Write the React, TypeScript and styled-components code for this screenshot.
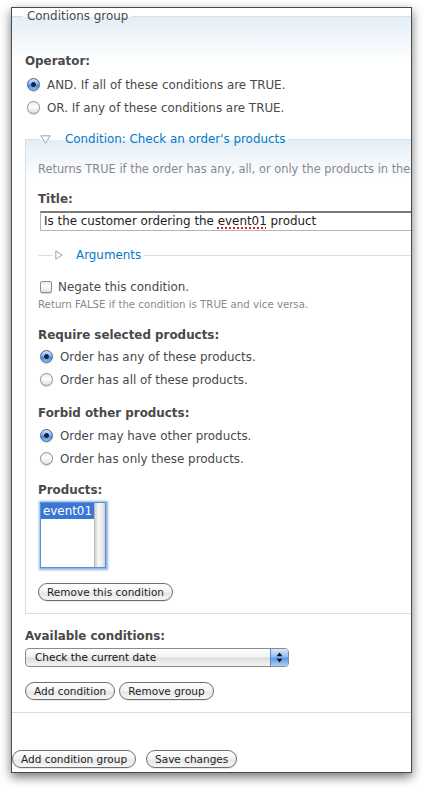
import React from 'react';
import styled, { createGlobalStyle } from 'styled-components';

const Global = createGlobalStyle`
  html, body { margin: 0; padding: 0; background: #fff; }
  body {
    font-family: "DejaVu Sans", Verdana, sans-serif;
    color: #494949;
    -webkit-font-smoothing: antialiased;
  }
  #root { width: 424px; height: 789px; overflow: hidden; }
`;

const Window = styled.div`
  margin: 7px 0 0 11px;
  width: 399px;
  height: 764px;
  border: 1px solid #4a4a4a;
  box-shadow: 0 4px 10px rgba(0, 0, 0, 0.55);
  background: #fff;
  overflow: hidden;
`;

const Fieldset = styled.fieldset<{ $variant: 'outer' | 'inner' | 'collapsed' }>`
  box-sizing: border-box;
  min-width: 0;
  border-style: solid;
  border-color: #d3e0ea;
  ${(p) =>
    p.$variant === 'outer'
      ? `
    margin: 0 0 0 -1px;
    width: 540px;
    border-width: 1px;
    padding: 29px 0 12px 13px;
    background: linear-gradient(#e4eef7, #fff 46px);
  `
      : p.$variant === 'inner'
      ? `
    margin: 12px 0 0 0;
    width: 500px;
    border-width: 1px;
    padding: 15px 0 12px 12px;
    background: linear-gradient(#e4eef7, #fff 40px);
  `
      : `
    margin: 16px 0 0 0;
    width: 480px;
    border-width: 1px 0 0 0;
    padding: 0;
    background: none;
  `}
`;

const Legend = styled.legend<{ $offset: number; $pad: number }>`
  margin-left: ${(p) => p.$offset}px;
  padding: 0 3px 0 ${(p) => p.$pad}px;
  line-height: 16px;
  height: 16px;
  font-size: 11.9px;
  color: #494949;
`;

const LegendInner = styled.span`
  display: flex;
  align-items: center;
  height: 16px;
`;

const Toggle = styled.svg<{ $gap: number }>`
  flex: none;
  margin-right: ${(p) => p.$gap}px;
`;

const LegendLink = styled.span`
  color: #027ac6;
  font-size: 11.9px;
`;

const Label = styled.div<{ $mt?: number }>`
  font-weight: bold;
  font-size: 11.9px;
  line-height: 16px;
  height: 16px;
  margin-top: ${(p) => p.$mt ?? 0}px;
  white-space: nowrap;
`;

const Group = styled.div<{ $mt?: number }>`
  display: flex;
  flex-direction: column;
  margin-top: ${(p) => p.$mt ?? 0}px;
`;

const OptionRow = styled.div<{ $h?: number }>`
  display: flex;
  align-items: center;
  height: ${(p) => p.$h ?? 23}px;
  padding-left: 2px;
  font-size: 11.9px;
  white-space: nowrap;
`;

const Radio = styled.span<{ $checked?: boolean }>`
  box-sizing: border-box;
  flex: none;
  width: 13px;
  height: 13px;
  margin-right: 7px;
  border-radius: 50%;
  border: 1px solid ${(p) => (p.$checked ? '#46648e' : '#8f8f8f')};
  background: ${(p) =>
    p.$checked
      ? 'radial-gradient(circle, #16233a 0 2px, rgba(22,35,58,0) 2.8px), linear-gradient(#d3e6fb, #78afee 50%, #3f86e0 55%, #93c4f6)'
      : 'linear-gradient(#ececec, #fdfdfd 45%, #f4f4f4 60%, #e2e2e2)'};
  box-shadow: 0 1px 1px rgba(0, 0, 0, 0.18);
`;

const Checkbox = styled.span`
  box-sizing: border-box;
  flex: none;
  width: 12px;
  height: 12px;
  margin-right: 6px;
  border-radius: 2px;
  border: 1px solid #8f8f8f;
  background: linear-gradient(#ececec, #fdfdfd 45%, #f4f4f4 60%, #e2e2e2);
  box-shadow: 0 1px 1px rgba(0, 0, 0, 0.15);
`;

const Description = styled.div<{ $size: number; $lh: number; $mt?: number }>`
  font-size: ${(p) => p.$size}px;
  line-height: ${(p) => p.$lh}px;
  height: ${(p) => p.$lh}px;
  margin-top: ${(p) => p.$mt ?? 0}px;
  color: #898989;
  white-space: nowrap;
`;

const TextField = styled.div`
  box-sizing: border-box;
  margin: 4px 0 0 2px;
  width: 460px;
  height: 20px;
  padding: 0 3px;
  border: 1px solid #b5b5b5;
  border-top: 2px solid #7b7b7b;
  background: #fff;
  font-size: 11.9px;
  line-height: 17px;
  color: #222;
  white-space: nowrap;
`;

const Misspelled = styled.span`
  text-decoration: underline dotted #e02020;
  text-decoration-thickness: 2px;
  text-underline-offset: 2px;
`;

const ListBox = styled.div`
  box-sizing: border-box;
  display: flex;
  margin: 5px 0 0 3px;
  width: 64px;
  height: 64px;
  background: #fff;
  box-shadow: 0 0 0 1px #5d8fd6, 0 0 2px 2.5px #8db3e4;
`;

const ListItems = styled.div`
  flex: 1;
  display: flex;
  flex-direction: column;
`;

const ListItem = styled.div<{ $selected?: boolean }>`
  height: 16px;
  line-height: 16px;
  padding-left: 2px;
  font-size: 11.9px;
  background: ${(p) => (p.$selected ? '#3b76d6' : 'transparent')};
  color: ${(p) => (p.$selected ? '#fff' : '#222')};
`;

const ScrollTrack = styled.div`
  flex: none;
  width: 10px;
  border-left: 1px solid #b9b9b9;
  background: linear-gradient(to right, #d4d4d4, #f6f6f6 35%, #ececec 70%, #d2d2d2);
`;

const ButtonRow = styled.div<{ $mt: number; $gap: number }>`
  display: flex;
  gap: ${(p) => p.$gap}px;
  margin-top: ${(p) => p.$mt}px;
`;

const Button = styled.button`
  box-sizing: border-box;
  height: 18px;
  margin: 0;
  padding: 0 8px;
  border: 1px solid #6f6f6f;
  border-radius: 9px;
  background: linear-gradient(#ffffff, #f3f3f3 50%, #e6e6e6 55%, #f7f7f7);
  box-shadow: 0 1px 0 rgba(0, 0, 0, 0.08);
  font-family: "DejaVu Sans", Verdana, sans-serif;
  font-size: 10.5px;
  line-height: 16px;
  color: #1e1e1e;
  white-space: nowrap;
`;

const Select = styled.div`
  box-sizing: border-box;
  display: flex;
  margin-top: 4px;
  width: 264px;
  height: 19px;
  border: 1px solid #8a8a8a;
  border-radius: 4px;
  background: linear-gradient(#ffffff, #f2f2f2 45%, #dedede 55%, #f4f4f4);
  overflow: hidden;
`;

const SelectText = styled.div`
  flex: 1;
  padding-left: 9px;
  font-size: 10.5px;
  line-height: 17px;
  color: #111;
  white-space: nowrap;
`;

const SelectArrows = styled.div`
  flex: none;
  width: 17px;
  display: flex;
  align-items: center;
  justify-content: center;
  border-left: 1px solid #5f86bd;
  background: linear-gradient(#d6e8fc, #8dbdf2 48%, #5898e6 52%, #a9d1f8);
`;

const DownTriangle = () => (
  <Toggle $gap={14} width="11" height="9" viewBox="0 0 11 9">
    <path d="M0.8 0.8 H10.2 L5.5 8.2 Z" fill="#fbfbfb" stroke="#a3a3a3" strokeWidth="1" strokeLinejoin="round" />
  </Toggle>
);

const RightTriangle = () => (
  <Toggle $gap={13} width="8" height="10" viewBox="0 0 8 10">
    <path d="M0.8 0.8 L7.2 5 L0.8 9.2 Z" fill="#fbfbfb" stroke="#a3a3a3" strokeWidth="1" strokeLinejoin="round" />
  </Toggle>
);

const UpDown = () => (
  <svg width="7" height="11" viewBox="0 0 7 11">
    <path d="M3.5 0.5 L6.5 4.2 H0.5 Z" fill="#111" />
    <path d="M3.5 10.5 L6.5 6.8 H0.5 Z" fill="#111" />
  </svg>
);

export default function App() {
  return (
    <>
      <Global />
      <Window>
        <Fieldset $variant="outer">
          <Legend $offset={-2} $pad={4}>Conditions group</Legend>

          <Label>Operator:</Label>
          <Group $mt={4}>
            <OptionRow>
              <Radio $checked />
              AND. If all of these conditions are TRUE.
            </OptionRow>
            <OptionRow>
              <Radio />
              OR. If any of these conditions are TRUE.
            </OptionRow>
          </Group>

          <Fieldset $variant="inner">
            <Legend $offset={2} $pad={0}>
              <LegendInner>
                <DownTriangle />
                <LegendLink>Condition: Check an order's products</LegendLink>
              </LegendInner>
            </Legend>

            <Description $size={11.4} $lh={14}>
              Returns TRUE if the order has any, all, or only the products in the
            </Description>

            <Label $mt={15}>Title:</Label>
            <TextField>
              Is the customer ordering the <Misspelled>event01</Misspelled> product
            </TextField>

            <Fieldset $variant="collapsed">
              <Legend $offset={15} $pad={2}>
                <LegendInner>
                  <RightTriangle />
                  <LegendLink>Arguments</LegendLink>
                </LegendInner>
              </Legend>
            </Fieldset>

            <Group $mt={16}>
              <OptionRow $h={16}>
                <Checkbox />
                Negate this condition.
              </OptionRow>
            </Group>
            <Description $size={10.2} $lh={12} $mt={4}>
              Return FALSE if the condition is TRUE and vice versa.
            </Description>

            <Label $mt={16}>Require selected products:</Label>
            <Group $mt={2}>
              <OptionRow>
                <Radio $checked />
                Order has any of these products.
              </OptionRow>
              <OptionRow>
                <Radio />
                Order has all of these products.
              </OptionRow>
            </Group>

            <Label $mt={14}>Forbid other products:</Label>
            <Group $mt={3}>
              <OptionRow>
                <Radio $checked />
                Order may have other products.
              </OptionRow>
              <OptionRow>
                <Radio />
                Order has only these products.
              </OptionRow>
            </Group>

            <Label $mt={12}>Products:</Label>
            <ListBox>
              <ListItems>
                <ListItem $selected>event01</ListItem>
              </ListItems>
              <ScrollTrack />
            </ListBox>

            <ButtonRow $mt={16} $gap={4}>
              <Button type="button">Remove this condition</Button>
            </ButtonRow>
          </Fieldset>

          <Label $mt={14}>Available conditions:</Label>
          <Select>
            <SelectText>Check the current date</SelectText>
            <SelectArrows>
              <UpDown />
            </SelectArrows>
          </Select>

          <ButtonRow $mt={15} $gap={4}>
            <Button type="button">Add condition</Button>
            <Button type="button">Remove group</Button>
          </ButtonRow>
        </Fieldset>

        <ButtonRow $mt={37} $gap={10}>
          <Button type="button">Add condition group</Button>
          <Button type="button">Save changes</Button>
        </ButtonRow>
      </Window>
    </>
  );
}
